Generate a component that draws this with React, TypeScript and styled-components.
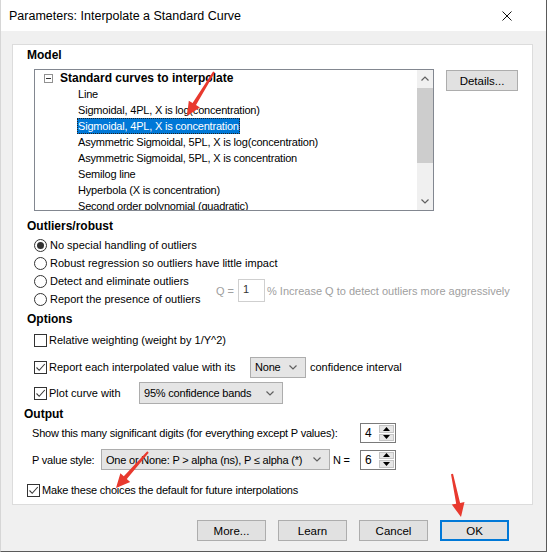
import styled, { createGlobalStyle } from "styled-components";

const GlobalStyle = createGlobalStyle`
  body {
    margin: 0;
    background: #ffffff;
    font-family: "Liberation Sans", Arial, sans-serif;
    font-size: 11px;
    color: #000;
  }
`;

const Screen = styled.div`
  position: relative;
  width: 547px;
  height: 554px;
  overflow: hidden;
`;

const Window = styled.div`
  width: 547px;
  height: 552px;
  box-sizing: border-box;
  border-left: 1px solid #d6d6d6;
  border-right: 1px solid #5a5a5a;
  border-bottom: 1px solid #5a5a5a;
  background: #f0f0f0;
  display: flex;
  flex-direction: column;
`;

const TitleBar = styled.div`
  height: 31px;
  flex: none;
  background: #ffffff;
  display: flex;
  align-items: center;
  justify-content: space-between;
  padding: 0 34px 0 8px;
  font-size: 12.5px;
`;

const Body = styled.div`
  flex: 1;
  padding: 13px 13px 0 11px;
  display: flex;
  flex-direction: column;
`;

const Panel = styled.div`
  height: 461px;
  box-sizing: border-box;
  background: #ffffff;
  border: 1px solid #dcdcdc;
  display: flex;
  flex-direction: column;
`;

const SectionTitle = styled.div<{ $top: number; $left?: number }>`
  margin-top: ${(p) => p.$top}px;
  margin-left: ${(p) => p.$left ?? 14}px;
  height: 16px;
  line-height: 16px;
  font-weight: bold;
  font-size: 12px;
`;

const ModelRow = styled.div`
  margin-top: 6px;
  padding-left: 21px;
  display: flex;
  align-items: flex-start;
  gap: 12px;
`;

const ListBox = styled.div`
  width: 400px;
  height: 142px;
  box-sizing: border-box;
  border: 1px solid #828790;
  display: flex;
`;

const Tree = styled.div`
  flex: 1;
  overflow: hidden;
  letter-spacing: -0.2px;
`;

const TreeRow = styled.div<{ $indent: number }>`
  height: 16px;
  display: flex;
  align-items: center;
  padding-left: ${(p) => p.$indent}px;
  white-space: nowrap;
`;

const Collapse = styled.div`
  width: 9px;
  height: 9px;
  box-sizing: border-box;
  border: 1px solid #919191;
  margin-right: 7px;
  display: flex;
  align-items: center;
  justify-content: center;
  &::after {
    content: "";
    width: 5px;
    height: 1px;
    background: #333;
  }
`;

const RootLabel = styled.span`
  font-weight: bold;
  font-size: 12px;
  letter-spacing: 0;
`;

const ItemLabel = styled.span<{ $selected?: boolean }>`
  height: 16px;
  line-height: 16px;
  padding: 0 1px;
  margin-left: -1px;
  box-sizing: border-box;
  background: ${(p) => (p.$selected ? "#0078d7" : "transparent")};
  color: ${(p) => (p.$selected ? "#ffffff" : "#000")};
  outline: ${(p) => (p.$selected ? "1px dotted #222" : "none")};
  outline-offset: -1px;
`;

const ScrollBar = styled.div`
  width: 16px;
  background: #f0f0f0;
  display: flex;
  flex-direction: column;
`;

const ScrollArrow = styled.div`
  height: 17px;
  display: flex;
  align-items: center;
  justify-content: center;
`;

const ScrollThumb = styled.div`
  margin-top: 1px;
  height: 75px;
  background: #cdcdcd;
`;

const Spacer = styled.div`
  flex: 1;
`;

const PushButton = styled.div<{ $w: number; $default?: boolean }>`
  width: ${(p) => p.$w}px;
  height: 21px;
  box-sizing: border-box;
  background: #e1e1e1;
  border: ${(p) => (p.$default ? "2px solid #0078d7" : "1px solid #adadad")};
  display: flex;
  align-items: center;
  justify-content: center;
  font-size: 11.5px;
  flex: none;
`;

const DetailsButton = styled(PushButton)`
  margin-top: 1px;
`;

const RadioList = styled.div`
  margin-top: 2px;
  padding-left: 21px;
  display: flex;
  flex-direction: column;
`;

const RadioRow = styled.div`
  height: 18px;
  display: flex;
  align-items: center;
  gap: 3px;
  white-space: nowrap;
`;

const Radio = styled.div<{ $checked?: boolean }>`
  width: 13px;
  height: 13px;
  box-sizing: border-box;
  border: 1px solid #333;
  border-radius: 50%;
  background: #fff;
  display: flex;
  align-items: center;
  justify-content: center;
  &::after {
    content: "";
    width: 7px;
    height: 7px;
    border-radius: 50%;
    background: ${(p) => (p.$checked ? "#333" : "transparent")};
  }
`;

const SplitRows = styled.div`
  display: flex;
  align-items: center;
`;

const RadioColumn = styled.div`
  width: 182px;
  display: flex;
  flex-direction: column;
`;

const QBlock = styled.div`
  display: flex;
  align-items: center;
  color: #a0a0a0;
  white-space: nowrap;
  margin-top: 1px;
`;

const QLabel = styled.span`
  width: 22px;
`;

const QInput = styled.div`
  width: 27px;
  height: 23px;
  box-sizing: border-box;
  border: 1px solid #cfcfcf;
  padding: 3px 0 0 4px;
  color: #333;
  margin-right: 2px;
`;

const CheckRow = styled.div<{ $top: number; $h: number; $left?: number; $tight?: boolean }>`
  margin-top: ${(p) => p.$top}px;
  height: ${(p) => p.$h}px;
  padding-left: ${(p) => p.$left ?? 21}px;
  display: flex;
  align-items: center;
  white-space: nowrap;
  letter-spacing: ${(p) => (p.$tight ? "-0.2px" : "0")};
`;

const CheckLabel = styled.div<{ $w?: number }>`
  display: flex;
  align-items: center;
  gap: 2px;
  width: ${(p) => (p.$w ? `${p.$w}px` : "auto")};
  flex: none;
`;

const Box = styled.div`
  width: 13px;
  height: 13px;
  box-sizing: border-box;
  border: 1px solid #333;
  background: #fff;
  display: flex;
  align-items: center;
  justify-content: center;
`;

const Combo = styled.div<{ $w: number; $h: number }>`
  width: ${(p) => p.$w}px;
  height: ${(p) => p.$h}px;
  box-sizing: border-box;
  background: #e5e5e5;
  border: 1px solid #adadad;
  display: flex;
  align-items: center;
  justify-content: space-between;
  padding: 0 8px 0 4px;
  font-size: 11px;
  letter-spacing: -0.2px;
  flex: none;
  white-space: nowrap;
`;

const After = styled.span`
  margin-left: 4px;
`;

const FieldRow = styled.div<{ $top: number; $h: number }>`
  margin-top: ${(p) => p.$top}px;
  height: ${(p) => p.$h}px;
  padding-left: 19px;
  display: flex;
  align-items: center;
  white-space: nowrap;
`;

const FieldLabel = styled.span<{ $w: number; $pad?: number }>`
  width: ${(p) => p.$w}px;
  padding-left: ${(p) => p.$pad ?? 0}px;
  box-sizing: border-box;
  font-size: 11px;
  letter-spacing: -0.2px;
  flex: none;
`;

const Spin = styled.div`
  width: 36px;
  height: 20px;
  box-sizing: border-box;
  border: 1px solid #7a7a7a;
  background: #fff;
  display: flex;
  flex: none;
`;

const SpinValue = styled.div`
  flex: 1;
  padding-left: 4px;
  line-height: 18px;
  font-size: 12px;
`;

const SpinButtons = styled.div`
  width: 15px;
  padding: 1px 1px 1px 0;
  display: flex;
  flex-direction: column;
  gap: 1px;
`;

const SpinButton = styled.div`
  flex: 1;
  background: #e6e6e6;
  border: 1px solid #c4c4c4;
  display: flex;
  align-items: center;
  justify-content: center;
`;

const ButtonRow = styled.div`
  margin-top: 15px;
  padding-right: 24px;
  display: flex;
  justify-content: flex-end;
  gap: 12px;
`;

const Overlay = styled.svg`
  position: absolute;
  left: 0;
  top: 0;
  pointer-events: none;
`;

const models = [
  "Line",
  "Sigmoidal, 4PL, X is log(concentration)",
  "Sigmoidal, 4PL, X is concentration",
  "Asymmetric Sigmoidal, 5PL, X is log(concentration)",
  "Asymmetric Sigmoidal, 5PL, X is concentration",
  "Semilog line",
  "Hyperbola (X is concentration)",
  "Second order polynomial (quadratic)",
];

const Chevron = ({ up }: { up?: boolean }) => (
  <svg width="8" height="5" viewBox="0 0 8 5">
    <path
      d={up ? "M0.5 4.5 L4 1 L7.5 4.5" : "M0.5 0.5 L4 4 L7.5 0.5"}
      fill="none"
      stroke="#606060"
      strokeWidth="1.2"
    />
  </svg>
);

const Tick = () => (
  <svg width="11" height="11" viewBox="0 0 11 11">
    <path d="M1.5 5.5 L4.2 8.3 L9.8 2" fill="none" stroke="#3a3a3a" strokeWidth="1.1" />
  </svg>
);

const Tri = ({ up }: { up?: boolean }) => (
  <svg width="7" height="4" viewBox="0 0 7 4">
    <path d={up ? "M0 4 L3.5 0 L7 4 Z" : "M0 0 L3.5 4 L7 0 Z"} fill="#000" />
  </svg>
);

function Check({ checked, children, w }: { checked?: boolean; children: string; w?: number }) {
  return (
    <CheckLabel $w={w}>
      <Box>{checked && <Tick />}</Box>
      <span>{children}</span>
    </CheckLabel>
  );
}

function SpinBox({ value }: { value: string }) {
  return (
    <Spin>
      <SpinValue>{value}</SpinValue>
      <SpinButtons>
        <SpinButton>
          <Tri up />
        </SpinButton>
        <SpinButton>
          <Tri />
        </SpinButton>
      </SpinButtons>
    </Spin>
  );
}

// red annotation arrows drawn over the dialog
function arrowPoints(x1: number, y1: number, x2: number, y2: number) {
  const dx = x2 - x1;
  const dy = y2 - y1;
  const len = Math.hypot(dx, dy);
  const ux = dx / len;
  const uy = dy / len;
  const px = -uy;
  const py = ux;
  const hl = 14;
  const hw = 6.5;
  const bx = x2 - ux * hl;
  const by = y2 - uy * hl;
  const pts = [
    [x1 + px * 1, y1 + py * 1],
    [bx + px * 2, by + py * 2],
    [bx + px * hw, by + py * hw],
    [x2, y2],
    [bx - px * hw, by - py * hw],
    [bx - px * 2, by - py * 2],
    [x1 - px * 1, y1 - py * 1],
  ];
  return pts.map((p) => p.map((v) => v.toFixed(1)).join(",")).join(" ");
}

const arrows = [
  [214, 72, 187, 116],
  [148, 452, 116, 488],
  [452, 474, 461, 517],
];

export default function App() {
  return (
    <Screen>
      <GlobalStyle />
      <Window>
        <TitleBar>
          <span>Parameters: Interpolate a Standard Curve</span>
          <svg width="10" height="10" viewBox="0 0 10 10">
            <path d="M0.5 0.5 L9.5 9.5 M9.5 0.5 L0.5 9.5" stroke="#111" strokeWidth="1" />
          </svg>
        </TitleBar>
        <Body>
          <Panel>
            <SectionTitle $top={2}>Model</SectionTitle>
            <ModelRow>
              <ListBox>
                <Tree>
                  <TreeRow $indent={9}>
                    <Collapse />
                    <RootLabel>Standard curves to interpolate</RootLabel>
                  </TreeRow>
                  {models.map((m, i) => (
                    <TreeRow key={m} $indent={43}>
                      <ItemLabel $selected={i === 2}>{m}</ItemLabel>
                    </TreeRow>
                  ))}
                </Tree>
                <ScrollBar>
                  <ScrollArrow>
                    <Chevron up />
                  </ScrollArrow>
                  <ScrollThumb />
                  <Spacer />
                  <ScrollArrow>
                    <Chevron />
                  </ScrollArrow>
                </ScrollBar>
              </ListBox>
              <DetailsButton $w={72}>Details...</DetailsButton>
            </ModelRow>

            <SectionTitle $top={7}>Outliers/robust</SectionTitle>
            <RadioList>
              <RadioRow>
                <Radio $checked />
                <span>No special handling of outliers</span>
              </RadioRow>
              <RadioRow>
                <Radio />
                <span>Robust regression so outliers have little impact</span>
              </RadioRow>
              <SplitRows>
                <RadioColumn>
                  <RadioRow>
                    <Radio />
                    <span>Detect and eliminate outliers</span>
                  </RadioRow>
                  <RadioRow>
                    <Radio />
                    <span>Report the presence of outliers</span>
                  </RadioRow>
                </RadioColumn>
                <QBlock>
                  <QLabel>Q =</QLabel>
                  <QInput>1</QInput>
                  <span>% Increase Q to detect outliers more aggressively</span>
                </QBlock>
              </SplitRows>
            </RadioList>

            <SectionTitle $top={3}>Options</SectionTitle>
            <CheckRow $top={5} $h={16}>
              <Check>Relative weighting (weight by 1/Y^2)</Check>
            </CheckRow>
            <CheckRow $top={8} $h={22}>
              <Check checked w={216}>
                Report each interpolated value with its
              </Check>
              <Combo $w={56} $h={21}>
                <span>None</span>
                <Chevron />
              </Combo>
              <After>confidence interval</After>
            </CheckRow>
            <CheckRow $top={4} $h={22}>
              <Check checked w={105}>
                Plot curve with
              </Check>
              <Combo $w={144} $h={22}>
                <span>95% confidence bands</span>
                <Chevron />
              </Combo>
            </CheckRow>

            <SectionTitle $top={2} $left={11}>
              Output
            </SectionTitle>
            <FieldRow $top={1} $h={20}>
              <FieldLabel $w={328}>
                Show this many significant digits (for everything except P values):
              </FieldLabel>
              <SpinBox value="4" />
            </FieldRow>
            <FieldRow $top={6} $h={21}>
              <FieldLabel $w={69}>P value style:</FieldLabel>
              <Combo $w={229} $h={21}>
                <span>One or None: P &gt; alpha (ns), P ≤ alpha (*)</span>
                <Chevron />
              </Combo>
              <FieldLabel $w={30} $pad={3}>
                N =
              </FieldLabel>
              <SpinBox value="6" />
            </FieldRow>
            <CheckRow $top={12} $h={16} $left={14} $tight>
              <Check checked>Make these choices the default for future interpolations</Check>
            </CheckRow>
          </Panel>
          <ButtonRow>
            <PushButton $w={69}>More...</PushButton>
            <PushButton $w={69}>Learn</PushButton>
            <PushButton $w={69}>Cancel</PushButton>
            <PushButton $w={69} $default>
              OK
            </PushButton>
          </ButtonRow>
        </Body>
      </Window>
      <Overlay width="547" height="554" viewBox="0 0 547 554">
        {arrows.map(([a, b, c, d]) => (
          <polygon key={`${a}-${b}`} points={arrowPoints(a, b, c, d)} fill="#e8392e" />
        ))}
      </Overlay>
    </Screen>
  );
}
